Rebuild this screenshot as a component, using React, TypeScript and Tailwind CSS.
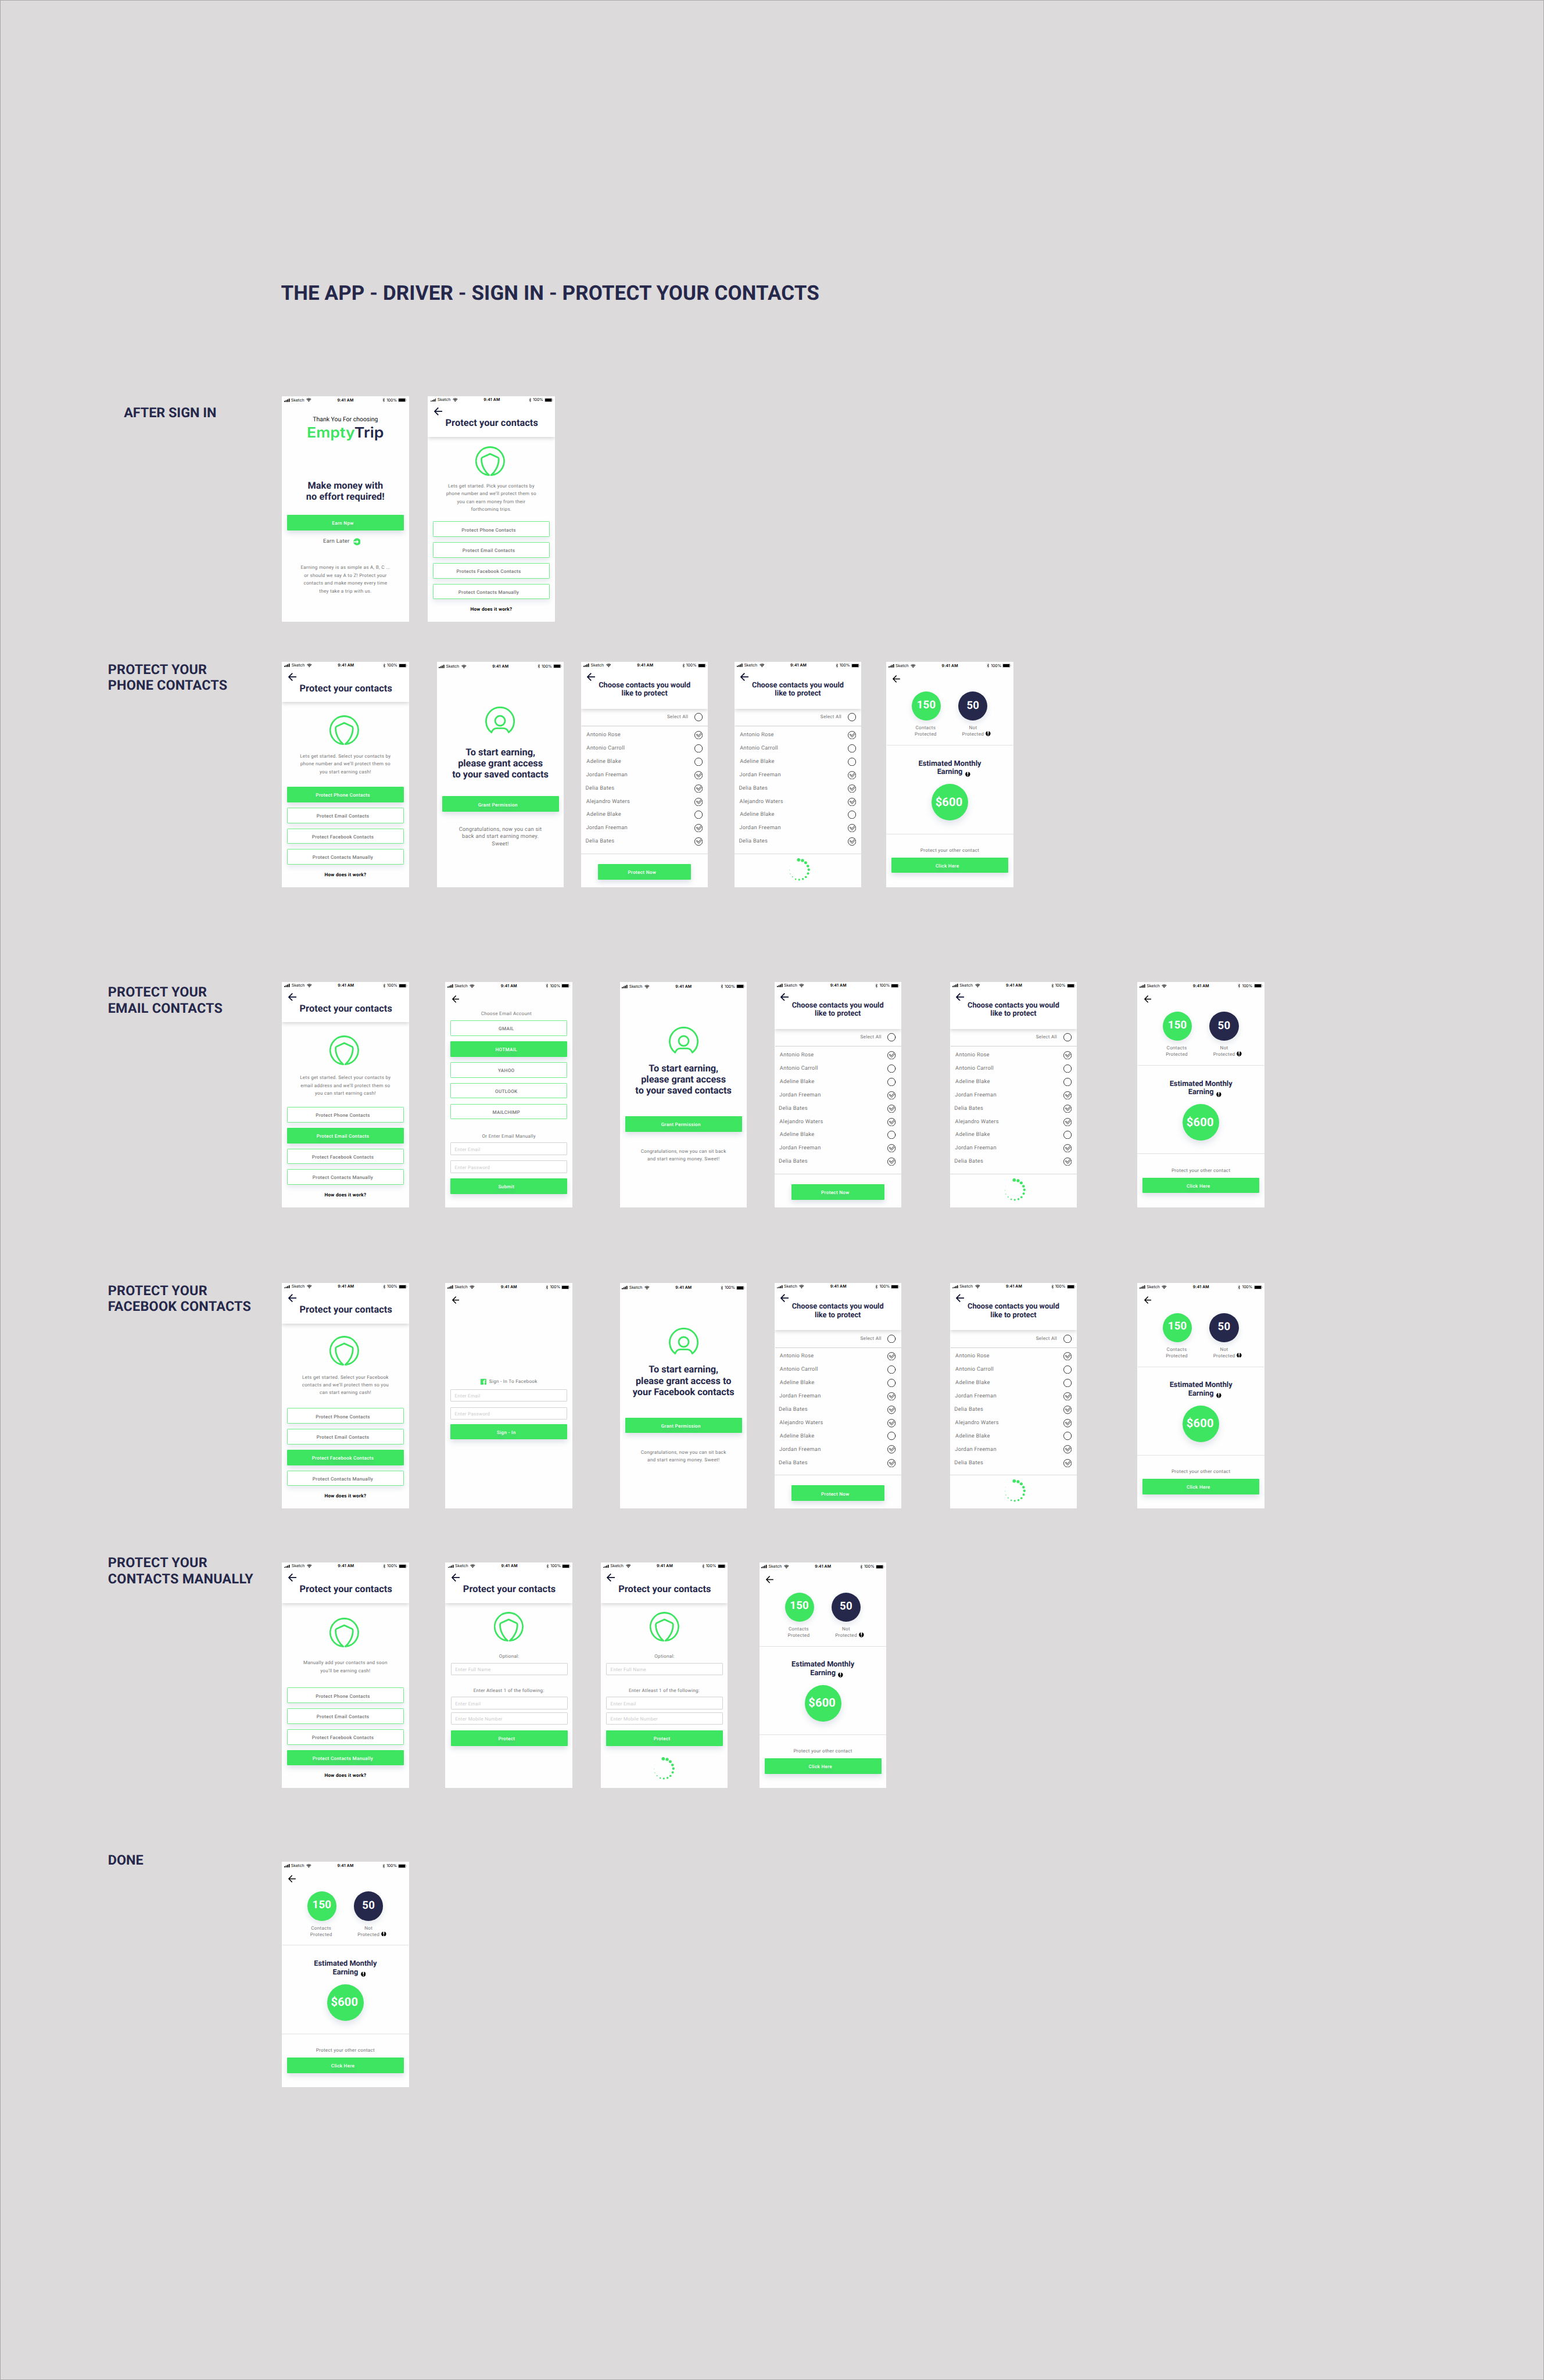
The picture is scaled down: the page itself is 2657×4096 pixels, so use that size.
import React from "react";

const CHOOSE = "Choose contacts you would\nlike to protect";

/* ---------- icons ---------- */

function Shield() {
  return (
    <svg viewBox="0 0 88 88" className="h-[88px] w-[88px] shrink-0" fill="none" stroke="#3de561" strokeWidth="4.9" strokeLinecap="round" strokeLinejoin="round">
      <path d="M40.4 85.3A41.4 41.4 0 1 1 46.8 85.3C58 76 69 58 69 40V37.2Q69 34.2 66.5 33L43.6 22.6L20.7 33Q18.2 34.2 18.2 37.2V40C18.2 58 29.2 76 40.4 85.3" />
    </svg>
  );
}

function Person() {
  return (
    <svg viewBox="0 0 88 88" className="h-[88px] w-[88px] shrink-0" fill="none" stroke="#3de561" strokeWidth="4.9" strokeLinecap="round" strokeLinejoin="round">
      <path d="M18.4 76.3A41.4 41.4 0 1 1 69.4 76.3C66 68 60 64.3 54 64.3H33.8C27.8 64.3 21.8 68 18.4 76.3Z" />
      <circle cx="43.9" cy="42" r="14.6" />
    </svg>
  );
}

function BackArrow({ className = "" }: { className?: string }) {
  return (
    <svg viewBox="0 0 24 24" className={"shrink-0 " + className} fill="none" strokeLinecap="butt">
      <path d="M12.5 1L1.8 12L12.5 23M1.8 12H24" />
    </svg>
  );
}

function Check({ on }: { on: boolean }) {
  return (
    <svg viewBox="0 0 24.6 24.6" className="h-[24.6px] w-[24.6px] shrink-0" fill="none" stroke="#111" strokeWidth="1.5" strokeLinejoin="round" strokeLinecap="round">
      {on ? (
        <>
          <path d="M20.6 4.4A11.5 11.5 0 1 0 23.4 9.2" />
          <path d="M23.2 6.6L12.6 18.2L6 11.4Q5.6 9.6 7.4 9.4L12.4 13.6L20.6 4.4" />
        </>
      ) : (
        <circle cx="12.3" cy="12.3" r="11.5" />
      )}
    </svg>
  );
}

function Info({ className = "" }: { className?: string }) {
  return (
    <svg viewBox="0 0 15 15" className={"absolute h-[15px] w-[15px] " + className}>
      <circle cx="7.5" cy="7.7" r="7.2" fill="#000" />
      <path d="M5.7 0H9.3L8.9 9H6.1Z" fill="#fff" />
      <circle cx="7.5" cy="11.6" r="1.5" fill="#fff" />
    </svg>
  );
}

const DOTS: [number, number, number][] = [
  [28, 4.9, 5], [39.5, 6.7, 4.6], [48.8, 13.4, 4.3], [55.4, 23.2, 4], [58.1, 33.9, 3.7],
  [55.9, 45, 3.5], [49.4, 55.4, 3.2], [40.6, 61.5, 3], [29.6, 63.4, 2.7], [19.2, 62, 2.2],
  [9.9, 54.9, 1.6], [3.3, 46.4, 1.2], [1.1, 34.8, 0.9], [2.7, 23.2, 0.6],
];

function Spinner({ className = "" }: { className?: string }) {
  return (
    <svg viewBox="0 0 62 67" className={"h-[67px] w-[62px] shrink-0 " + className} fill="#3de561">
      {DOTS.map(([x, y, r]) => (
        <circle key={x} cx={x} cy={y} r={r} />
      ))}
    </svg>
  );
}

/* ---------- shared parts ---------- */

function StatusBar({ className }: { className: string }) {
  return (
    <div className={"grid w-[369.5px] shrink-0 grid-cols-3 items-center font-['Inter'] text-[11.8px] leading-[14px] text-black " + className}>
      <div className="flex items-center">
        <svg viewBox="0 0 17 10" className="h-[10px] w-[17px]">
          <rect x="0" y="6.4" width="3" height="3.6" rx=".6" />
          <rect x="4.5" y="4.4" width="3" height="5.6" rx=".6" />
          <rect x="9" y="2.2" width="3" height="7.8" rx=".6" />
          <rect x="13.5" y="0" width="3" height="10" rx=".6" />
        </svg>
        <span className="ml-[4px] w-[39px] tracking-[0.15px]">Sketch</span>
        <svg viewBox="0 0 15 11" className="ml-[6px] h-[11px] w-[15px]" fill="none" stroke="#000" strokeWidth="1.9">
          <path d="M.8 4A9.6 9.6 0 0 1 14.2 4" />
          <path d="M3.2 6.5A6.2 6.2 0 0 1 11.8 6.5" />
          <path d="M7.5 10.8L5.2 8.4A3.2 3.2 0 0 1 9.8 8.4Z" fill="#000" stroke="none" />
        </svg>
      </div>
      <div className="text-center font-semibold tracking-[0.3px]">9:41 AM</div>
      <div className="flex items-center justify-end">
        <svg viewBox="0 0 8 12" className="h-[12px] w-[8px]" fill="none" stroke="#000" strokeWidth="1">
          <path d="M.8 3.2L6.6 8.6L3.9 11.2V.8L6.6 3.4L.8 8.8" />
        </svg>
        <span className="ml-[4px] tracking-[-0.2px]">100%</span>
        <svg viewBox="0 0 26 12" className="ml-[4px] h-[12px] w-[26px]">
          <rect x=".5" y=".5" width="22" height="11" rx="2" fill="none" stroke="#8a8a8a" />
          <rect x="1.8" y="1.8" width="19.4" height="8.4" rx=".6" />
          <path d="M24 4C25.6 4.6 25.6 7.4 24 8Z" fill="#999" />
        </svg>
      </div>
    </div>
  );
}

function Phone({ children }: { children: React.ReactNode }) {
  return <div className="flex h-[667px] w-[375px] shrink-0 flex-col overflow-hidden bg-[#fefefe]">{children}</div>;
}

function Header({ title, small = false }: { title: string; small?: boolean }) {
  return (
    <div className={small ? "z-10 flex h-[139px] shrink-0 flex-col bg-white shadow-[0_5px_12px_rgba(0,0,0,0.17)]" : "z-10 flex h-[120px] shrink-0 flex-col bg-white shadow-[0_5px_12px_rgba(0,0,0,0.17)]"}>
      <StatusBar className="ml-[1.5px] h-[22.6px] pl-[6px]" />
      <BackArrow className="mt-[10px] ml-[18px] h-[24px] w-[24px] stroke-[#0b1030] stroke-[3]" />
      {small ? (
        <h2 className="mt-[2px] text-center text-[22px] leading-[25px] font-bold whitespace-pre text-[#25284a]">{title}</h2>
      ) : (
        <h2 className="mt-[6px] pl-[3px] text-center text-[28px] leading-[33px] font-bold tracking-[0.14px] text-[#25284a]">{title}</h2>
      )}
    </div>
  );
}

function Button({ label, solid = false, flat = false, className = "" }: { label: string; solid?: boolean; flat?: boolean; className?: string }) {
  return (
    <div
      className={
        "flex h-[46px] shrink-0 items-center justify-center rounded-[2px] pt-[3px] pr-[15px] text-[14px] font-medium tracking-[0.54px] " +
        (solid
          ? "bg-[#3de561] text-white shadow-[0_8px_16px_rgba(70,90,130,0.18)] [text-shadow:0_8px_8px_rgba(140,160,170,0.35)] "
          : flat
            ? "border border-[#72ec8c] bg-white text-[#757575] "
            : "border border-[#72ec8c] bg-white text-[#757575] shadow-[0_8px_14px_rgba(70,90,130,0.12)] ") +
        className
      }
    >
      {label}
    </div>
  );
}

function Field({ label, className = "" }: { label: string; className?: string }) {
  return (
    <div className={"flex h-[37px] shrink-0 items-center rounded-[2px] border border-[#d2d2d2] bg-white pt-[3px] pl-[11px] text-[14px] tracking-[0.46px] text-[#cbcbcb] " + className}>
      {label}
    </div>
  );
}

function Caption({ children, className = "" }: { children: React.ReactNode; className?: string }) {
  return <p className={"shrink-0 text-center text-[14px] leading-[16px] tracking-[0.46px] text-[#757575] " + className}>{children}</p>;
}

const BODY = "shrink-0 text-center text-[14px] leading-[23px] tracking-[0.46px] whitespace-pre text-[#757575] ";

/* ---------- screens ---------- */

function Thanks() {
  return (
    <Phone>
      <StatusBar className="h-[22.8px] pl-[6px]" />
      <p className="mt-[35px] text-center text-[18px] leading-[22px] text-[#111]">Thank You For choosing</p>
      <div className="mt-[3.4px] text-center font-['Inter'] text-[42.5px] leading-[50px] font-semibold text-[#25284a] [transform:scaleX(1.08)]">
        <span className="text-[#3de561]">Empty</span>Trip
      </div>
      <h2 className="mt-[113.3px] text-center text-[28px] leading-[33px] font-bold tracking-[0.14px] whitespace-pre text-[#25284a]">{"Make money with\nno effort required!"}</h2>
      <Button solid label="Earn Npw" className="mx-[15px] mt-[37.5px]" />
      <div className="mt-[23.5px] flex h-[22px] items-center justify-center gap-[10px] pr-[21px] text-[16px] leading-[22px] font-medium tracking-[0.55px] text-[#757575]">
        Earn Later
        <svg viewBox="0 0 22 22" className="h-[22px] w-[22px]">
          <circle cx="11" cy="11" r="10.6" fill="#3de561" />
          <path d="M1 9.3H10V5.2L15.6 11L10 16.8V12.7H1Z" fill="#fff" />
        </svg>
      </div>
      <p className={BODY + "mt-[54px]"}>{"Earning money is as simple as A, B, C ...\nor should we say A to Z! Protect your\ncontacts and make money every time\nthey take a trip with us."}</p>
    </Phone>
  );
}

const MENU = ["Protect Phone Contacts", "Protect Email Contacts", "Protect Facebook Contacts", "Protect Contacts Manually"];

function Menu({ text, active, iconGap, textGap, items = MENU }: { text: string; active?: number; iconGap: string; textGap: string; items?: string[] }) {
  return (
    <Phone>
      <Header title="Protect your contacts" />
      <div className="flex h-[250px] shrink-0 flex-col">
        <div className={"flex justify-center pr-[5px] " + iconGap}>
          <Shield />
        </div>
        <p className={BODY + textGap}>{text}</p>
      </div>
      <div className="flex flex-col gap-[15.4px] px-[15px]">
        {items.map((label, i) => (
          <Button key={label} label={label} solid={i === active} />
        ))}
      </div>
      <p className="mt-[22px] text-center text-[14px] leading-[16px] font-bold tracking-[0.48px] text-black">How does it work?</p>
    </Phone>
  );
}

function Grant({ heading, headingGap, buttonGap, children }: { heading: string; headingGap: string; buttonGap: string; children: React.ReactNode }) {
  return (
    <Phone>
      <StatusBar className="h-[28.6px] pl-[6px]" />
      <div className="mt-[104.4px] flex justify-center">
        <Person />
      </div>
      <h2 className={"text-center text-[28px] leading-[33px] font-bold whitespace-pre text-[#25284a] " + headingGap}>{heading}</h2>
      <Button solid label="Grant Permission" className={"mx-[15px] " + buttonGap} />
      {children}
    </Phone>
  );
}

const PEOPLE: [string, boolean, string][] = [
  ["Antonio Rose", true, "pl-[16px]"],
  ["Antonio Carroll", false, "pl-[16px]"],
  ["Adeline Blake", false, "pl-[16px]"],
  ["Jordan Freeman", true, "pl-[14.5px]"],
  ["Delia Bates", true, "pl-[13px]"],
  ["Alejandro Waters", true, "pl-[15px]"],
  ["Adeline Blake", false, "pl-[16px] -mt-[1.7px]"],
  ["Jordan Freeman", true, "pl-[14.5px]"],
  ["Delia Bates", true, "pl-[13px]"],
];

function ContactList({ loading = false }: { loading?: boolean }) {
  return (
    <Phone>
      <Header small title={CHOOSE} />
      <div className="ml-[2px] flex h-[53px] shrink-0 items-center justify-end gap-[18px] border-b border-[#cfcfcf] pr-[16px]">
        <Caption className="pb-[2px]">Select All</Caption>
        <Check on={false} />
      </div>
      <ul className="flex shrink-0 flex-col pt-[5px]">
        {PEOPLE.map(([name, on, inset], i) => (
          <li key={i} className={"flex h-[39.6px] items-center justify-between pr-[16px] text-[16px] tracking-[0.5px] text-[#757575] " + inset}>
            {name}
            <Check on={on} />
          </li>
        ))}
      </ul>
      <div className="mt-[15.5px] border-t border-[#dadada]" />
      {loading ? <Spinner className="mt-[11.5px] ml-[161.8px]" /> : <Button solid label="Protect Now" className="mx-[50px] mt-[29.5px]" />}
    </Phone>
  );
}

function Result() {
  return (
    <Phone>
      <StatusBar className="h-[25px] pl-[6px]" />
      <BackArrow className="mt-[15.3px] ml-[19px] h-[22px] w-[22px] stroke-black stroke-[2.7]" />
      <div className="mt-[26.5px] ml-[75px] flex shrink-0 gap-[52px]">
        <div className="flex w-[86px] flex-col">
          <div className="flex h-[86px] items-center justify-center rounded-full bg-[#3de561] pb-[5px] text-[32px] font-bold tracking-[0.4px] text-white shadow-[0_8px_16px_rgba(70,90,130,0.14)]">150</div>
          <p className="mt-[12px] pr-[4px] text-center text-[14px] leading-[19px] tracking-[0.46px] text-[#757575]">Contacts Protected</p>
        </div>
        <div className="relative flex w-[86px] flex-col">
          <div className="flex h-[86px] items-center justify-center rounded-full bg-[#25284a] pb-[2px] text-[32px] font-bold tracking-[0.4px] text-white shadow-[0_8px_16px_rgba(70,90,130,0.14)]">50</div>
          <p className="mt-[12px] px-[6px] text-center text-[14px] leading-[19px] tracking-[0.46px] text-[#757575]">Not Protected</p>
          <Info className="top-[117px] left-[80.6px]" />
        </div>
      </div>
      <div className="mx-px mt-[22px] border-t border-[#e2e2e2]" />
      <h2 className="relative mt-[42px] text-center text-[22px] leading-[25px] font-bold whitespace-pre text-[#25284a]">
        {"Estimated Monthly\nEarning"}
        <Info className="top-[35px] left-[232.6px]" />
      </h2>
      <div className="mt-[21.7px] flex h-[108px] w-[108px] shrink-0 items-center justify-center self-center rounded-full bg-[#3de561] pr-[5px] pb-[4px] text-[34.5px] font-bold tracking-[0.3px] text-white shadow-[0_10px_20px_rgba(70,90,130,0.16)]">
        $600
      </div>
      <div className="mt-[38px] border-t border-[#e2e2e2]" />
      <Caption className="mt-[40px]">Protect your other contact</Caption>
      <Button solid label="Click Here" className="mx-[15px] mt-[13px]" />
    </Phone>
  );
}

function EmailAccount() {
  return (
    <Phone>
      <StatusBar className="h-[25px] pl-[6px]" />
      <BackArrow className="mt-[15.3px] ml-[19px] h-[22px] w-[22px] stroke-black stroke-[2.7]" />
      <Caption className="mt-[25px] pr-[15px]">Choose Email Account</Caption>
      <div className="mt-[10.5px] flex flex-col gap-[15.8px] px-[15px]">
        {["GMAIL", "HOTMAIL", "YAHOO", "OUTLOOK", "MAILCHIMP"].map((label, i) => (
          <Button key={label} label={label} solid={i === 1} flat />
        ))}
      </div>
      <Caption className="mt-[42px]">Or Enter Email Manually</Caption>
      <Field label="Enter Email" className="mx-[15px] mt-[10.8px]" />
      <Field label="Enter Password" className="mx-[15px] mt-[16px]" />
      <Button solid label="Submit" className="mx-[15px] mt-[16px]" />
    </Phone>
  );
}

function FacebookSignIn() {
  return (
    <Phone>
      <StatusBar className="h-[25px] pl-[6px]" />
      <BackArrow className="mt-[15.3px] ml-[19px] h-[22px] w-[22px] stroke-black stroke-[2.7]" />
      <div className="mt-[220.7px] flex h-[17px] items-center justify-center gap-[9px]">
        <svg viewBox="0 0 17 17" className="h-[17px] w-[17px]">
          <rect width="17" height="17" rx="1" fill="#3de561" />
          <path d="M9 17V10.6H6.9V8H9V6.2C9 4 10.3 2.8 12.3 2.8H14.2V5.1H13C12 5.1 11.7 5.6 11.7 6.4V8H14.1L13.8 10.6H11.7V17Z" fill="#fff" />
        </svg>
        <Caption>Sign - In To Facebook</Caption>
      </div>
      <Field label="Enter Email" className="mx-[15px] mt-[14px]" />
      <Field label="Enter Password" className="mx-[15px] mt-[16px]" />
      <Button solid label="Sign - In" className="mx-[15px] mt-[13px]" />
    </Phone>
  );
}

function ManualForm({ loading = false }: { loading?: boolean }) {
  return (
    <Phone>
      <Header title="Protect your contacts" />
      <div className="mt-[26.5px] flex justify-center pl-[1.5px]">
        <Shield />
      </div>
      <Caption className="mt-[36px] pl-[2px]">Optional:</Caption>
      <Field label="Enter Full Name" className="mt-[10.5px] mr-[14px] ml-[16px]" />
      <Caption className="mt-[36.5px]">Enter Atleast 1 of the following:</Caption>
      <Field label="Enter Email" className="mt-[10.5px] mr-[14px] ml-[16px]" />
      <Field label="Enter Mobile Number" className="mt-[9px] mr-[14px] ml-[16px]" />
      <Button solid label="Protect" className="mt-[16px] mr-[14px] ml-[16px]" />
      {loading && <Spinner className="mt-[33.4px] ml-[157.3px]" />}
    </Phone>
  );
}

/* ---------- board ---------- */

function Row({ label, labelClass, className, children }: { label: string; labelClass: string; className: string; children: React.ReactNode }) {
  return (
    <section className={"flex h-[667px] shrink-0 " + className}>
      <h3 className={"shrink-0 text-[40px] leading-[47px] font-bold whitespace-pre text-[#25284a] " + labelClass}>{label}</h3>
      {children}
    </section>
  );
}

const SAVED = "To start earning,\nplease grant access\nto your saved contacts";
const SIT_BACK = "Congratulations, now you can sit back\nand start earning money. Sweet!";

export default function App() {
  return (
    <div className="h-[4096px] w-[2657px] overflow-hidden bg-[#dcdadb] outline outline-1 -outline-offset-1 outline-[#a9a8a8]">
      <main className="flex h-[7034px] w-[4562px] flex-col font-['Roboto'] [text-rendering:geometricPrecision] [zoom:0.58242]">
        <h1 className="mt-[832px] ml-[830px] h-[70px] shrink-0 text-[60px] leading-[70px] font-bold tracking-[0.22px] whitespace-nowrap text-[#25284a]">
          THE APP - DRIVER - SIGN IN - PROTECT YOUR CONTACTS
        </h1>

        <Row label="AFTER SIGN IN" labelClass="ml-[366px] w-[467px] pt-[26px]" className="mt-[269px]">
          <Thanks />
          <div className="w-[56px]" />
          <Menu
            text={"Lets get started. Pick your contacts by\nphone number and we’ll protect them so\nyou can earn money from their\nforthcoming trips."}
            iconGap="mt-[27px]"
            textGap="mt-[19.3px] h-[86px] overflow-hidden"
            items={["Protect Phone Contacts", "Protect Email Contacts", "Protects Facebook Contacts", "Protect Contacts Manually"]}
          />
        </Row>

        <Row label={"PROTECT YOUR\nPHONE CONTACTS"} labelClass="ml-[319px] w-[514px] tracking-[0.4px]" className="mt-[117px]">
          <Menu active={0} text={"Lets get started. Select your contacts by\nphone number and we’ll protect them so\nyou start earning cash!"} iconGap="mt-[39px]" textGap="mt-[21.5px]" />
          <div className="w-[83px]" />
          <Grant heading={SAVED} headingGap="mt-[29.7px]" buttonGap="mt-[48.3px]">
            <p className="mt-[42px] text-center text-[16px] leading-[22px] tracking-[0.46px] whitespace-pre text-[#757575]">{"Congratulations, now you can sit\nback and start earning money.\nSweet!"}</p>
          </Grant>
          <div className="w-[51px]" />
          <ContactList />
          <div className="w-[78px]" />
          <ContactList loading />
          <div className="w-[74px]" />
          <Result />
        </Row>

        <Row label={"PROTECT YOUR\nEMAIL CONTACTS"} labelClass="ml-[319px] w-[514px] pt-[8px] tracking-[0.4px]" className="mt-[279px]">
          <Menu active={1} text={"Lets get started. Select your contacts by\nemail address and we’ll protect them so\nyou can start earning cash!"} iconGap="mt-[38px]" textGap="mt-[26.5px]" />
          <div className="w-[108px]" />
          <EmailAccount />
          <div className="w-[141px]" />
          <Grant heading={SAVED} headingGap="mt-[18.5px]" buttonGap="mt-[59.5px]">
            <p className={BODY + "mt-[45.7px]"}>{SIT_BACK}</p>
          </Grant>
          <div className="w-[81px]" />
          <ContactList />
          <div className="w-[144px]" />
          <ContactList loading />
          <div className="w-[179px]" />
          <Result />
        </Row>

        <Row label={"PROTECT YOUR\nFACEBOOK CONTACTS"} labelClass="ml-[319px] w-[514px] tracking-[0.5px]" className="mt-[223px]">
          <Menu active={2} text={"Lets get started. Select your Facebook\ncontacts and we’ll protect them so you\ncan start earning cash!"} iconGap="mt-[36px]" textGap="mt-[23.6px]" />
          <div className="w-[108px]" />
          <FacebookSignIn />
          <div className="w-[141px]" />
          <Grant heading={"To start earning,\nplease grant access to\nyour Facebook contacts"} headingGap="mt-[18.5px]" buttonGap="mt-[59.5px]">
            <p className={BODY + "mt-[45.7px]"}>{SIT_BACK}</p>
          </Grant>
          <div className="w-[81px]" />
          <ContactList />
          <div className="w-[144px]" />
          <ContactList loading />
          <div className="w-[179px]" />
          <Result />
        </Row>

        <Row label={"PROTECT YOUR\nCONTACTS MANUALLY"} labelClass="-mt-[22px] ml-[319px] w-[514px] tracking-[0.5px]" className="mt-[159px]">
          <Menu active={3} text={"Manually add your contacts and soon\nyou’ll be earning cash!"} iconGap="mt-[44px]" textGap="mt-[33.5px]" />
          <div className="w-[108px]" />
          <ManualForm />
          <div className="w-[84px]" />
          <ManualForm loading />
          <div className="w-[94px]" />
          <Result />
        </Row>

        <Row label="DONE" labelClass="-mt-[27px] ml-[319px] w-[514px]" className="mt-[217px]">
          <Result />
        </Row>
      </main>
    </div>
  );
}
